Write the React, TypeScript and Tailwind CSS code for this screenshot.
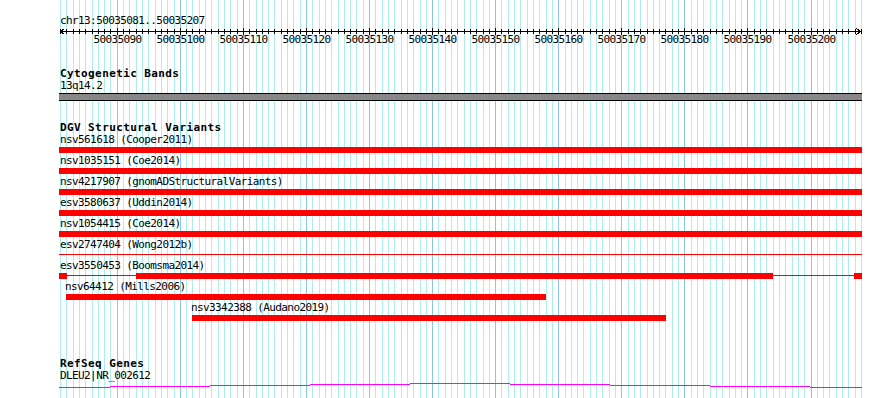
import React from "react";

// track area: page x 59..862, one base = 801/127 px, first base line at x=60
const TRACK_LEFT = 59;
const TRACK_W = 803;
const PX_PER_BASE = 801 / 127;
const START = 50035081;

const baseX = (k: number) => Math.round(60 + k * PX_PER_BASE);

type Part = { x1: number; x2: number; thin?: boolean };
type Variant = { name: string; labelX: number; parts: Part[] };

const VARIANTS: Variant[] = [
  { name: "nsv561618 (Cooper2011)", labelX: 1, parts: [{ x1: 0, x2: 803 }] },
  { name: "nsv1035151 (Coe2014)", labelX: 1, parts: [{ x1: 0, x2: 803 }] },
  { name: "nsv4217907 (gnomADStructuralVariants)", labelX: 1, parts: [{ x1: 0, x2: 803 }] },
  { name: "esv3580637 (Uddin2014)", labelX: 1, parts: [{ x1: 0, x2: 803 }] },
  { name: "nsv1054415 (Coe2014)", labelX: 1, parts: [{ x1: 0, x2: 803 }] },
  { name: "esv2747404 (Wong2012b)", labelX: 1, parts: [{ x1: 0, x2: 803, thin: true }] },
  {
    name: "esv3550453 (Boomsma2014)",
    labelX: 1,
    parts: [
      { x1: 0, x2: 8 },
      { x1: 8, x2: 77, thin: true },
      { x1: 77, x2: 714 },
      { x1: 714, x2: 795, thin: true },
      { x1: 795, x2: 803 },
    ],
  },
  { name: "nsv64412 (Mills2006)", labelX: 6, parts: [{ x1: 7, x2: 487 }] },
  { name: "nsv3342388 (Audano2019)", labelX: 132, parts: [{ x1: 133, x2: 607 }] },
];

// intron "hat" of DLEU2, drawn as 1px steps (page x from, page x to, page y)
const GENE_STEPS = [
  [59, 110, 387],
  [110, 210, 386],
  [210, 310, 385],
  [310, 410, 384],
  [410, 510, 383],
  [510, 610, 384],
  [610, 710, 385],
  [710, 810, 386],
  [810, 862, 387],
];

const isMajor = (k: number) => k % 10 === 9 && k < 127;

function Grid() {
  return (
    <svg className="pointer-events-none absolute inset-0" width={890} height={398} shapeRendering="crispEdges">
      {Array.from({ length: 128 }, (_, k) => (
        <rect key={k} x={baseX(k)} y={0} width={1} height={398} fill={isMajor(k) ? "#8cc6ea" : "#afeeee"} />
      ))}
    </svg>
  );
}

function Ruler() {
  return (
    <svg className="-mt-[1px] block" width={TRACK_W} height={10} shapeRendering="crispEdges">
      <rect x={1} y={5} width={801} height={1} fill="#000" />
      {Array.from({ length: 128 }, (_, k) => (
        <rect
          key={k}
          x={baseX(k) - TRACK_LEFT}
          y={isMajor(k) ? 2 : 3}
          width={1}
          height={isMajor(k) ? 7 : 5}
          fill="#000"
        />
      ))}
      {/* arrow heads */}
      <path d="M1.5 5.5 L5.5 2.5 M1.5 5.5 L5.5 8.5" stroke="#000" strokeWidth={1} fill="none" />
      <path d="M801.5 5.5 L797.5 2.5 M801.5 5.5 L797.5 8.5" stroke="#000" strokeWidth={1} fill="none" />
    </svg>
  );
}

function VariantRow({ v }: { v: Variant }) {
  return (
    <div className="flex flex-col">
      <div className="h-[12px] whitespace-nowrap leading-[12px]" style={{ paddingLeft: v.labelX }}>
        {v.name}
      </div>
      <div className="relative mt-[1px] h-[6px]">
        {v.parts.map((p, i) => (
          <div
            key={i}
            className={p.thin ? "absolute top-[2px] h-[1px] bg-[#ff0000]" : "absolute top-0 h-[6px] bg-[#ff0000]"}
            style={{ left: p.x1, width: p.x2 - p.x1 }}
          />
        ))}
      </div>
    </div>
  );
}

export default function App() {
  const majors = Array.from({ length: 12 }, (_, i) => 9 + i * 10);

  return (
    <div className="relative h-[398px] w-[890px] overflow-hidden bg-white font-['DejaVu_Sans_Mono',monospace] text-[11px] tracking-[-0.6px] text-black">
      <Grid />

      <div className="relative ml-[59px] flex w-[803px] flex-col">
        {/* ruler */}
        <div className="mt-[15px] h-[12px] pl-[1px] leading-[12px]">chr13:{START}..50035207</div>
        <Ruler />
        <div className="relative -mt-[2px] h-[12px] leading-[12px]">
          {majors.map((k) => (
            <span
              key={k}
              className="absolute top-0 -translate-x-1/2 whitespace-nowrap"
              style={{ left: baseX(k) - TRACK_LEFT + 0.5 }}
            >
              {START + k}
            </span>
          ))}
        </div>

        {/* cytogenetic bands */}
        <div className="mt-[22px] h-[12px] pl-[1px] font-bold leading-[12px] tracking-[0.4px]">
          Cytogenetic Bands
        </div>
        <div className="h-[12px] pl-[1px] leading-[12px]">13q14.2</div>
        <div className="mt-[1px] h-[8px] border-y border-black bg-[#888888]" />

        {/* DGV */}
        <div className="mt-[21px] h-[12px] pl-[1px] font-bold leading-[12px] tracking-[0.4px]">
          DGV Structural Variants
        </div>
        <div className="flex flex-col gap-[2px]">
          {VARIANTS.map((v) => (
            <VariantRow key={v.name} v={v} />
          ))}
        </div>

        {/* RefSeq */}
        <div className="mt-[37px] h-[12px] pl-[1px] font-bold leading-[12px] tracking-[0.4px]">
          RefSeq Genes
        </div>
        <div className="h-[12px] pl-[1px] leading-[12px]">DLEU2|NR_002612</div>
        <svg className="block" width={TRACK_W} height={8} shapeRendering="crispEdges">
          {GENE_STEPS.map(([a, b, y]) => (
            <rect key={a} x={a - TRACK_LEFT} y={y - 382} width={b - a} height={1} fill="#ff00ff" />
          ))}
        </svg>
      </div>
    </div>
  );
}
